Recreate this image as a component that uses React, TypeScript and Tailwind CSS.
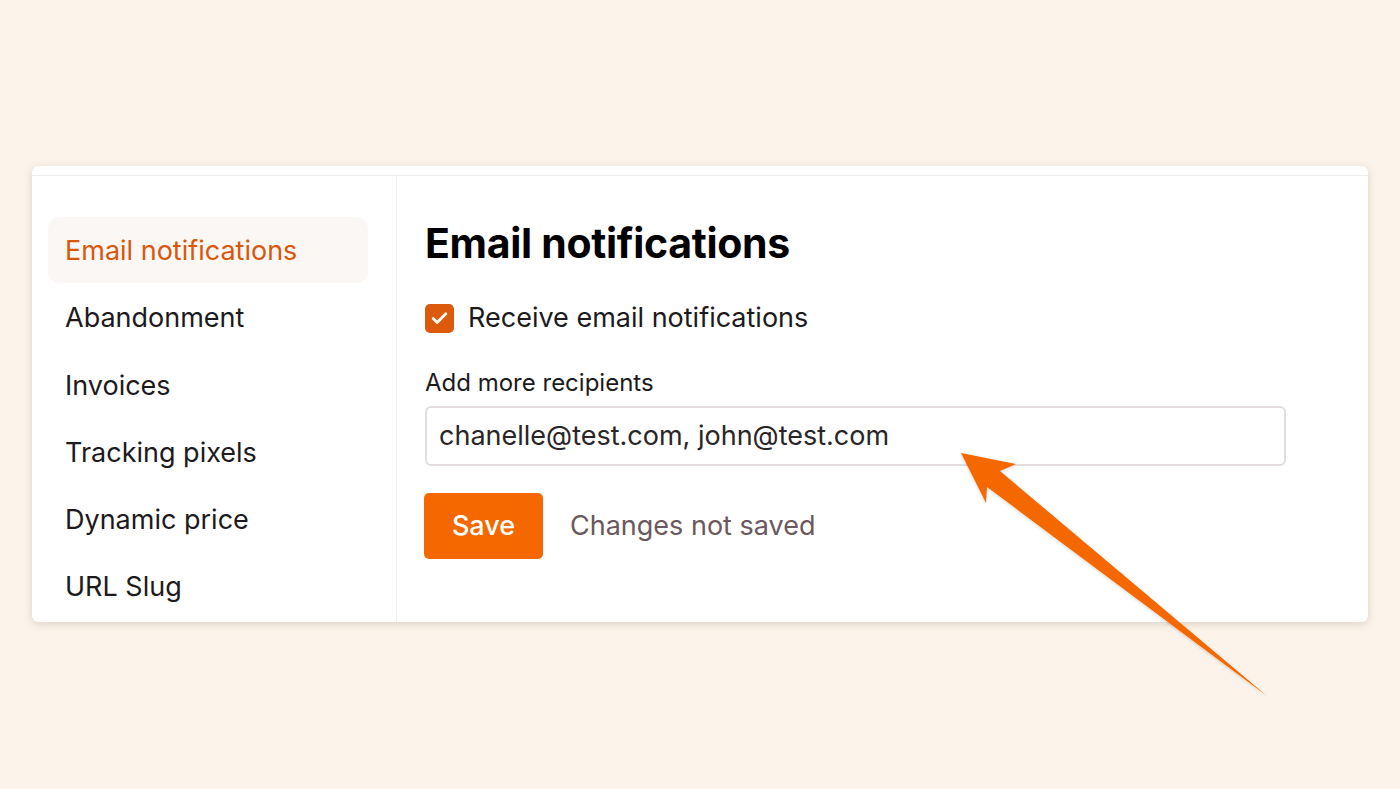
import { Check } from 'lucide-react'

const navItems = [
  'Email notifications',
  'Abandonment',
  'Invoices',
  'Tracking pixels',
  'Dynamic price',
  'URL Slug',
]

function Arrow() {
  return (
    <svg
      className="absolute left-0 top-0 pointer-events-none"
      width="1400"
      height="789"
      viewBox="0 0 1400 789"
    >
      <defs>
        <filter id="arrowShadow" x="-10%" y="-10%" width="120%" height="120%">
          <feDropShadow dx="0" dy="1" stdDeviation="1.5" floodColor="#000" floodOpacity="0.18" />
        </filter>
      </defs>
      <polygon
        points="961,453 1016,464 1000,471 1267,696 987,487 986,503"
        fill="#f56800"
        filter="url(#arrowShadow)"
      />
    </svg>
  )
}

export default function App() {
  return (
    <div
      className="relative w-[1400px] h-[789px] bg-[#fcf3ea] pt-[166px] px-[32px] overflow-hidden"
      style={{ fontFamily: 'Inter, "Noto Sans", sans-serif' }}
    >
      <div className="w-[1336px] h-[456px] bg-white rounded-[6px] shadow-[0_2px_8px_rgba(80,60,40,0.18)] flex flex-col">
        <div className="h-[10px] border-b border-[#ececec] shrink-0" />
        <div className="flex flex-1">
          {/* Sidebar */}
          <div className="w-[365px] border-r border-[#efefef] pt-[41px] pl-[16px] pr-[28px]">
            {navItems.map((item, i) => (
              <div
                key={item}
                className={
                  i === 0
                    ? 'h-[66px] mb-[1.2px] pt-[3px] px-[17px] flex items-center rounded-[12px] bg-[#faf7f5] text-[#d9570c] text-[27px]'
                    : 'h-[66px] mb-[1.2px] pt-[3px] px-[17px] flex items-center text-[#1c1a1d] text-[27px]'
                }
              >
                {item}
              </div>
            ))}
          </div>

          {/* Main */}
          <div className="flex-1 pl-[28px] pt-[43px]">
            <h1 className="text-[41px] font-bold text-black leading-[48px] tracking-[-0.3px]">Email notifications</h1>

            <label className="mt-[34px] flex items-center gap-[14px]">
              <span className="w-[29px] h-[29px] rounded-[5px] bg-[#db5a0b] flex items-center justify-center">
                <Check className="w-[19px] h-[19px] text-white" strokeWidth={3.5} />
              </span>
              <span className="text-[27px] text-[#1c1a1d] leading-[34px]">Receive email notifications</span>
            </label>

            <div className="mt-[33px] text-[24px] text-[#1c1a1d] leading-[30px]">Add more recipients</div>

            <div className="mt-[8px] w-[861px] h-[60px] border-2 border-[#e3dddd] rounded-[6px] flex items-center px-[12px] text-[27px] text-[#2a2527]">
              chanelle@test.com, john@test.com
            </div>

            <div className="mt-[27px] flex items-center gap-[27px]">
              <button className="-ml-[1px] w-[119px] h-[66px] rounded-[5px] bg-[#f56800] text-white text-[27px] font-medium">
                Save
              </button>
              <span className="text-[27px] text-[#6a585d]">Changes not saved</span>
            </div>
          </div>
        </div>
      </div>
      <Arrow />
    </div>
  )
}
